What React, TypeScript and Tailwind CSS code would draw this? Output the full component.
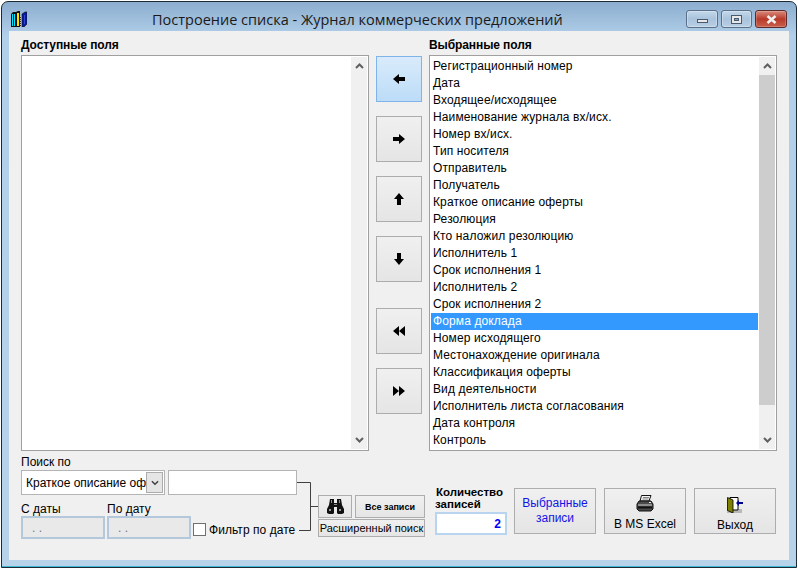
import React from 'react';

const fields = [
  'Регистрационный номер',
  'Дата',
  'Входящее/исходящее',
  'Наименование журнала вх/исх.',
  'Номер вх/исх.',
  'Тип носителя',
  'Отправитель',
  'Получатель',
  'Краткое описание оферты',
  'Резолюция',
  'Кто наложил резолюцию',
  'Исполнитель 1',
  'Срок исполнения 1',
  'Исполнитель 2',
  'Срок исполнения 2',
  'Форма доклада',
  'Номер исходящего',
  'Местонахождение оригинала',
  'Классификация оферты',
  'Вид деятельности',
  'Исполнитель листа согласования',
  'Дата контроля',
  'Контроль',
];

function Chevron({ down }: { down?: boolean }) {
  return (
    <svg width="9" height="6" viewBox="0 0 9 6" className={down ? 'rotate-180' : ''}>
      <path d="M1 5 L4.5 1.5 L8 5" fill="none" stroke="#606060" strokeWidth="2" />
    </svg>
  );
}

function Scrollbar({ thumb }: { thumb?: boolean }) {
  return (
    <div className="w-[16px] mr-[1px] my-[1px] bg-[#f0f0f0] flex flex-col shrink-0">
      <div className="h-[18px] flex items-center justify-center shrink-0">
        <Chevron />
      </div>
      <div className="flex-1 flex flex-col">
        {thumb && <div className="h-[330px] bg-[#cdcdcd]" />}
      </div>
      <div className="h-[18px] flex items-center justify-center shrink-0">
        <Chevron down />
      </div>
    </div>
  );
}

function ArrowIcon({ d }: { d: string }) {
  return (
    <svg width="14" height="14" viewBox="0 0 14 14">
      <path d={d} fill="#000" />
    </svg>
  );
}

function MoveButton({ d, active, className }: { d: string; active?: boolean; className?: string }) {
  return (
    <div
      className={`w-[46px] h-[46px] flex items-center justify-center border ${
        active
          ? 'border-[#7eb4ea] bg-gradient-to-b from-[#d9ebfb] to-[#bcdcf8]'
          : 'border-[#acacac] bg-gradient-to-b from-[#f0f0f0] to-[#e5e5e5]'
      } ${className ?? ''}`}
    >
      <ArrowIcon d={d} />
    </div>
  );
}

function BookIcon() {
  return (
    <svg width="16" height="16" viewBox="0 0 16 16" className="shrink-0">
      <path d="M0 3 L2 1 H5 V16 H0 Z" fill="#111" />
      <path d="M1 3 H2 V15 H1 Z M3 3 H4 V15 H3 Z" fill="#00e5ff" />
      <path d="M5 1 L7 0 H9 V16 H5 Z" fill="#111" />
      <path d="M6 2 H8 V15 H6 Z" fill="#f5e400" />
      <path d="M9 5 H11 V16 H9 Z" fill="#c8c8c8" />
      <path d="M9.5 6 V15" stroke="#333" strokeDasharray="1 1" strokeWidth="1" />
      <path d="M11 3 L14 1 H16 V13 L13 16 H11 Z" fill="#0a1a9a" stroke="#111" strokeWidth="0.6" />
      <path d="M13.5 4 V13" stroke="#2f45d8" strokeWidth="1" />
    </svg>
  );
}

function Binoculars() {
  return (
    <svg width="17" height="15" viewBox="0 0 17 15">
      <path d="M3 0 H7 V4 H10 V0 H14 L15 6 L17 10 V14 L15 15 H11 L10 14 V8 H7 V14 L6 15 H2 L0 14 V10 L2 6 Z" fill="#111" />
      <path d="M4 1 H5 V4 H4 Z M12 1 H13 V4 H12 Z M7 5 H10 V6 H7 Z" fill="#8a8a8a" />
      <path d="M2 10 H4 V12 H2 Z M12 10 H14 V12 H12 Z" fill="#9a9a9a" />
    </svg>
  );
}

function Printer() {
  return (
    <svg width="18" height="17" viewBox="0 0 18 17">
      <path d="M5.5 0.5 H15 L13 6 H4 Z" fill="#f4f4f4" stroke="#111" />
      <path d="M7 2.5 H13 M6.5 4 H12.5" stroke="#555" strokeWidth="0.7" />
      <path d="M3 6 H15 L17 9 V14 L15 16 H3 L1 14 V9 Z" fill="#4a4a4a" stroke="#111" />
      <path d="M2 10 H16" stroke="#d0d0d0" />
      <path d="M2 12.5 H16" stroke="#111" strokeWidth="2" />
      <path d="M13 7.5 H15" stroke="#eee" />
    </svg>
  );
}

function DoorIcon() {
  return (
    <svg width="16" height="16" viewBox="0 0 16 16">
      <rect x="0" y="12" width="15" height="4" fill="#b8b8b8" />
      <path d="M3 0.5 H11 V13 H3 Z" fill="#fff" stroke="#000" />
      <path d="M0.5 0.5 L6 3 V16 L0.5 13.5 Z" fill="#808000" stroke="#000" strokeWidth="0.8" />
      <path d="M9 6 L12 3 V5 H16 V7 H12 V9 Z" fill="#000090" />
    </svg>
  );
}

function CmdButton({ children, className }: { children: React.ReactNode; className?: string }) {
  return (
    <div
      className={`border border-[#adadad] bg-gradient-to-b from-[#f0f0f0] to-[#e5e5e5] flex items-center ${className ?? ''}`}
    >
      {children}
    </div>
  );
}

export default function App() {
  return (
    <div
      className="w-[798px] h-[570px] bg-white overflow-hidden text-[12px] leading-[14px] text-black"
      style={{ fontFamily: '"Liberation Sans", Arial, sans-serif' }}
    >
      <div className="w-[796px] h-[567px] ml-[1px] mt-[1px] rounded-t-[7px] border border-[#1e2a33] shadow-[inset_0_-1px_0_#3fb8d8] bg-gradient-to-b from-[#8cadcf] via-[#b1cfe9] via-[6%] to-[#b7d3ea] flex flex-col px-[7px] pb-[7px]">
        {/* title bar */}
        <div className="h-[29px] flex items-start shrink-0">
          <div className="mt-[9px] ml-[2px]">
            <BookIcon />
          </div>
          <div
            className="ml-[125px] mt-[8px] text-[14.5px] leading-[20px] text-[#1a1a1a] whitespace-nowrap"
            style={{ fontFamily: '"Open Sans", sans-serif' }}
          >
            Построение списка - Журнал коммерческих предложений
          </div>
          <div className="ml-auto mr-[2px] mt-[8px] flex gap-[3px]">
            <div className="w-[32px] h-[18px] rounded-[3px] border border-[#5a6f88] shadow-[inset_0_0_0_1px_rgba(255,255,255,0.3)] bg-gradient-to-b from-[#c3d7ea] via-[#a9c3dc] to-[#b9cfe4] flex items-center justify-center">
              <div className="w-[11px] h-[4px] mt-[4px] bg-[#e8e8e8] border border-[#4a5a6e]" />
            </div>
            <div className="w-[31px] h-[18px] rounded-[3px] border border-[#5a6f88] shadow-[inset_0_0_0_1px_rgba(255,255,255,0.3)] bg-gradient-to-b from-[#c3d7ea] via-[#a9c3dc] to-[#b9cfe4] flex items-center justify-center">
              <div className="w-[11px] h-[9px] bg-[#e8e8e8] border border-[#4a5a6e] flex items-center justify-center">
                <div className="w-[5px] h-[3px] bg-[#8aa5c0] border border-[#4a5a6e]" />
              </div>
            </div>
            <div className="w-[32px] h-[18px] rounded-[3px] border border-[#5c2a2a] shadow-[inset_0_0_0_1px_rgba(255,255,255,0.2)] bg-gradient-to-b from-[#d98a7c] via-[#b9382a] to-[#c9604c] flex items-center justify-center">
              <svg width="11" height="9" viewBox="0 0 11 9">
                <path d="M1.5 1 L9.5 8 M9.5 1 L1.5 8" stroke="#f0f0f0" strokeWidth="2.6" />
              </svg>
            </div>
          </div>
        </div>

        {/* client area */}
        <div className="flex-1 bg-[#f0f0f0] px-[12px] flex flex-col">
          <div className="flex mt-[7px] h-[14px] font-bold tracking-[-0.1px]">
            <div className="w-[408px]">Доступные поля</div>
            <div>Выбранные поля</div>
          </div>
          <div className="flex mt-[3px]">
            <div className="w-[348px] h-[396px] bg-white border border-[#a0a0a0] flex justify-end">
              <Scrollbar />
            </div>
            <div className="w-[60px] pl-[7px] pt-[1px] flex flex-col">
              <MoveButton active d="M1 7 L7 2 V5 H13 V9 H7 V12 Z" />
              <MoveButton className="mt-[14px]" d="M13 7 L7 2 V5 H1 V9 H7 V12 Z" />
              <MoveButton className="mt-[14px]" d="M7 1 L12 7 H9 V13 H5 V7 H2 Z" />
              <MoveButton className="mt-[14px]" d="M7 13 L12 7 H9 V1 H5 V7 H2 Z" />
              <MoveButton className="mt-[26px]" d="M1 7 L7 2 V12 Z M7 7 L13 2 V12 Z" />
              <MoveButton className="mt-[14px]" d="M13 7 L7 2 V12 Z M7 7 L1 2 V12 Z" />
            </div>
            <div className="w-[348px] h-[396px] bg-white border border-[#a0a0a0] flex">
              <div className="flex-1 pt-[2px] pl-[1px] pr-[1px] overflow-hidden tracking-[0.12px]">
                {fields.map((f) => (
                  <div
                    key={f}
                    className={`h-[17px] leading-[17px] pl-[2px] whitespace-nowrap ${
                      f === 'Форма доклада' ? 'bg-[#3399ff] text-white' : ''
                    }`}
                  >
                    {f}
                  </div>
                ))}
              </div>
              <Scrollbar thumb />
            </div>
          </div>

          {/* bottom controls */}
          <div className="flex mt-[5px]">
            <div className="w-[276px] shrink-0">
              <div className="h-[14px] leading-[12px]">Поиск по</div>
              <div className="flex h-[25px]">
                <div className="w-[144px] bg-white border border-[#b4b4b4] flex items-center pl-[4px] relative overflow-hidden">
                  <span className="whitespace-nowrap">Краткое описание оф</span>
                  <div className="absolute right-[1px] top-[1px] w-[17px] h-[21px] bg-[#e5e5e5] border border-[#acacac] flex items-center justify-center">
                    <svg width="8" height="6" viewBox="0 0 9 6">
                      <path d="M1 1 L4.5 4.5 L8 1" fill="none" stroke="#404040" strokeWidth="1.6" />
                    </svg>
                  </div>
                </div>
                <div className="ml-[3px] w-[129px] bg-white border border-[#b4b4b4]" />
              </div>
              <div className="flex mt-[7px] h-[14px]">
                <div className="w-[86px]">С даты</div>
                <div>По дату</div>
              </div>
              <div className="flex h-[23px] items-end">
                <div className="w-[84px] h-[23px] bg-[#e9e9e9] border-2 border-[#b4c8dc] text-[#777] flex items-center pl-[9px]">
                  . .
                </div>
                <div className="ml-[2px] w-[84px] h-[23px] bg-[#e9e9e9] border-2 border-[#b4c8dc] text-[#777] flex items-center pl-[9px]">
                  . .
                </div>
                <div className="ml-[2px] mb-[3px] w-[13px] h-[13px] bg-white border border-[#707070]" />
                <div className="ml-[3px] mb-[2px] whitespace-nowrap tracking-[0.05px]">Фильтр по дате</div>
              </div>
            </div>
            <svg width="21" height="66" viewBox="0 0 21 66" className="shrink-0 mt-[14px]">
              <path d="M0 12.5 H13.5 V60.5 H2 M13.5 36.5 H21" fill="none" stroke="#404040" />
            </svg>
            <div className="w-[107px] shrink-0 mt-[39px]">
              <div className="flex gap-[3px] h-[23px]">
                <CmdButton className="w-[34px] justify-center">
                  <Binoculars />
                </CmdButton>
                <CmdButton className="w-[70px] justify-center font-bold text-[9px]">Все записи</CmdButton>
              </div>
              <CmdButton className="mt-[1px] h-[18px] justify-center text-[11px] whitespace-nowrap">
                Расширенный поиск
              </CmdButton>
            </div>
            <div className="w-[72px] ml-[10px] shrink-0 mt-[30px]">
              <div className="font-bold text-[11.5px] leading-[12px] h-[24px]">
                <span className="block pl-[1px]">Количество</span>
                <span className="block">записей</span>
              </div>
              <div className="h-[23px] mt-[2px] bg-white border-2 border-[#b8d4ee] text-[#0000ff] font-bold flex items-center justify-end pr-[4px]">
                2
              </div>
            </div>
            <CmdButton className="ml-[7px] mt-[32px] w-[82px] h-[46px] justify-center text-[#1414e6] text-center leading-[15px] flex-col">
              <span>Выбранные</span>
              <span>записи</span>
            </CmdButton>
            <CmdButton className="ml-[8px] mt-[32px] w-[82px] h-[46px] pt-[6px] flex-col">
              <Printer />
              <span className="mt-[5px]">В MS Excel</span>
            </CmdButton>
            <CmdButton className="ml-[8px] mt-[32px] w-[82px] h-[46px] pt-[8px] flex-col">
              <DoorIcon />
              <span className="mt-[5px]">Выход</span>
            </CmdButton>
          </div>
        </div>
      </div>
    </div>
  );
}
